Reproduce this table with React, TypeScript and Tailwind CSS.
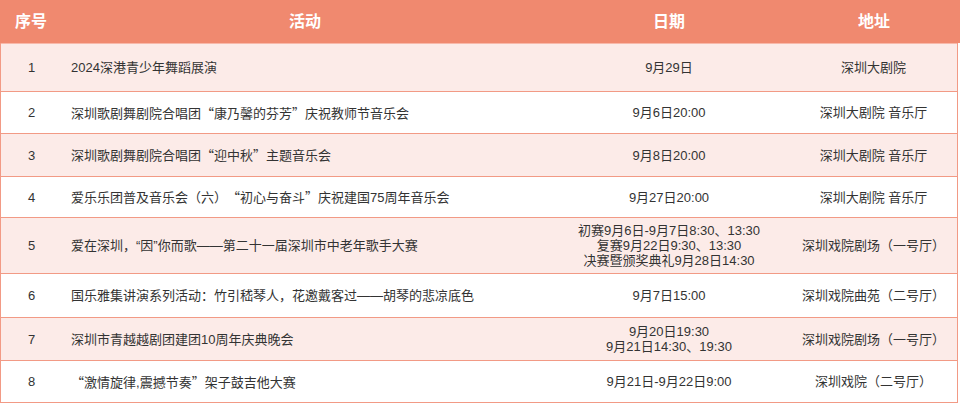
import React from "react";

const Q = ({ children }: { children: React.ReactNode }) => (
  <span className="font-['Noto_Sans_CJK_SC'] [font-feature-settings:'fwid']">{children}</span>
);

type Row = {
  n: string;
  act: React.ReactNode;
  date: string[];
  addr: string;
  h: string;
  odd: boolean;
};

const rows: Row[] = [
  { n: "1", act: "2024深港青少年舞蹈展演", date: ["9月29日"], addr: "深圳大剧院", h: "h-[48px]", odd: true },
  {
    n: "2",
    act: (
      <>
        深圳歌剧舞剧院合唱团<Q>“</Q>康乃馨的芬芳<Q>”</Q>庆祝教师节音乐会
      </>
    ),
    date: ["9月6日20:00"],
    addr: "深圳大剧院 音乐厅",
    h: "h-[42px]",
    odd: false,
  },
  {
    n: "3",
    act: (
      <>
        深圳歌剧舞剧院合唱团<Q>“</Q>迎中秋<Q>”</Q>主题音乐会
      </>
    ),
    date: ["9月8日20:00"],
    addr: "深圳大剧院 音乐厅",
    h: "h-[43px]",
    odd: true,
  },
  {
    n: "4",
    act: (
      <>
        爱乐乐团普及音乐会（六）<Q>“</Q>初心与奋斗<Q>”</Q>庆祝建国75周年音乐会
      </>
    ),
    date: ["9月27日20:00"],
    addr: "深圳大剧院 音乐厅",
    h: "h-[41px]",
    odd: false,
  },
  {
    n: "5",
    act: "爱在深圳，“因”你而歌——第二十一届深圳市中老年歌手大赛",
    date: ["初赛9月6日-9月7日8:30、13:30", "复赛9月22日9:30、13:30", "决赛暨颁奖典礼9月28日14:30"],
    addr: "深圳戏院剧场（一号厅）",
    h: "h-[56px]",
    odd: true,
  },
  {
    n: "6",
    act: "国乐雅集讲演系列活动：竹引嵇琴人，花邀戴客过——胡琴的悲凉底色",
    date: ["9月7日15:00"],
    addr: "深圳戏院曲苑（二号厅）",
    h: "h-[44px]",
    odd: false,
  },
  {
    n: "7",
    act: "深圳市青越越剧团建团10周年庆典晚会",
    date: ["9月20日19:30", "9月21日14:30、19:30"],
    addr: "深圳戏院剧场（一号厅）",
    h: "h-[43px]",
    odd: true,
  },
  {
    n: "8",
    act: (
      <>
        <Q>“</Q>激情旋律,震撼节奏<Q>”</Q>架子鼓吉他大赛
      </>
    ),
    date: ["9月21日-9月22日9:00"],
    addr: "深圳戏院（二号厅）",
    h: "h-[42px]",
    odd: false,
  },
];

export default function App() {
  return (
    <div
      lang="zh-CN"
      className="w-[960px] h-[405px] bg-white font-['Liberation_Sans','Noto_Sans_CJK_SC',sans-serif] text-[#333333] overflow-hidden [text-spacing-trim:space-all]"
    >
      <div className="w-[958px]">
        <div className="grid grid-cols-[62px_486px_242px_1fr] h-[43px] bg-[#F0896F] text-white font-bold text-[16px] items-center w-[960px]">
          <div className="text-center">序号</div>
          <div className="text-center">活动</div>
          <div className="text-center">日期</div>
          <div className="text-center pr-[2px]">地址</div>
        </div>
        <div className="border-l border-r border-b border-[#F29A85]">
          {rows.map((r, i) => (
            <div
              key={r.n}
              className={`grid grid-cols-[61px_486px_242px_1fr] items-center text-[13px] leading-[15px] ${r.h} ${
                i === 0 ? "border-t border-[#F8B9AA]" : "border-t border-[#F29A85]"
              } ${r.odd ? "bg-[#FCEBE8]" : "bg-white"}`}
            >
              <div className="text-center">{r.n}</div>
              <div className="pl-[9px] whitespace-nowrap">{r.act}</div>
              <div className="text-center whitespace-nowrap">
                {r.date.map((d) => (
                  <div key={d}>{d}</div>
                ))}
              </div>
              <div className="text-center whitespace-nowrap">{r.addr}</div>
            </div>
          ))}
        </div>
      </div>
    </div>
  );
}
